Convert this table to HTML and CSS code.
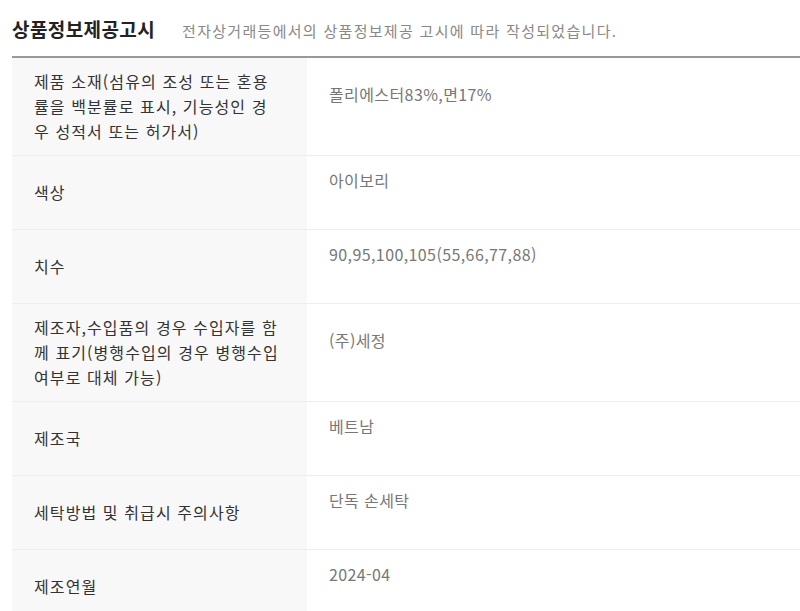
FILE: index.html
```html
<!DOCTYPE html>
<html lang="ko">
<head>
<meta charset="utf-8">
<title>상품정보제공고시</title>
<link rel="stylesheet" href="styles.css">
</head>
<body>
<section class="notice">
  <header class="notice-head">
    <h2 class="notice-title">상품정보제공고시</h2>
    <p class="notice-desc">전자상거래등에서의 상품정보제공 고시에 따라 작성되었습니다.</p>
  </header>
  <div class="notice-table">
    <div class="row">
      <div class="label">제품 소재(섬유의 조성 또는 혼용률을 백분률로 표시, 기능성인 경우 성적서 또는 허가서)</div>
      <div class="value">폴리에스터83%,면17%</div>
    </div>
    <div class="row">
      <div class="label">색상</div>
      <div class="value">아이보리</div>
    </div>
    <div class="row">
      <div class="label">치수</div>
      <div class="value">90,95,100,105(55,66,77,88)</div>
    </div>
    <div class="row">
      <div class="label">제조자,수입품의 경우 수입자를 함께 표기(병행수입의 경우 병행수입 여부로 대체 가능)</div>
      <div class="value">(주)세정</div>
    </div>
    <div class="row">
      <div class="label">제조국</div>
      <div class="value">베트남</div>
    </div>
    <div class="row">
      <div class="label">세탁방법 및 취급시 주의사항</div>
      <div class="value">단독 손세탁</div>
    </div>
    <div class="row">
      <div class="label">제조연월</div>
      <div class="value">2024-04</div>
    </div>
  </div>
</section>
</body>
</html>
```

FILE: styles.css
```css
html, body {
  margin: 0;
  padding: 0;
  background: #fff;
}
body {
  font-family: "Noto Sans CJK KR", "Noto Sans", sans-serif;
}
.notice {
  padding-left: 12px;
}
.notice-head {
  display: flex;
  align-items: baseline;
  gap: 27px;
  height: 58px;
  box-sizing: border-box;
  padding-top: 16px;
  border-bottom: 2px solid #999;
}
.notice-title {
  margin: 0;
  font-size: 19px;
  font-weight: 700;
  letter-spacing: 0.4px;
  color: #222;
  line-height: 26px;
}
.notice-desc {
  margin: 0;
  font-size: 15px;
  letter-spacing: 1.3px;
  color: #888;
  line-height: 26px;
}
.row {
  display: grid;
  grid-template-columns: 295px 1fr;
  min-height: 73px;
  border-bottom: 1px solid #eeeeee;
}
.label {
  display: flex;
  align-items: center;
  box-sizing: border-box;
  padding: 11px 26px 11px 22px;
  background: #f8f8f8;
  font-size: 16px;
  letter-spacing: 1.1px;
  line-height: 25px;
  color: #333;
  word-break: break-all;
}
.value {
  display: flex;
  align-items: center;
  padding: 0 22px 24px 22px;
  font-size: 16px;
  letter-spacing: 0.4px;
  line-height: 25px;
  color: #777;
}
```
